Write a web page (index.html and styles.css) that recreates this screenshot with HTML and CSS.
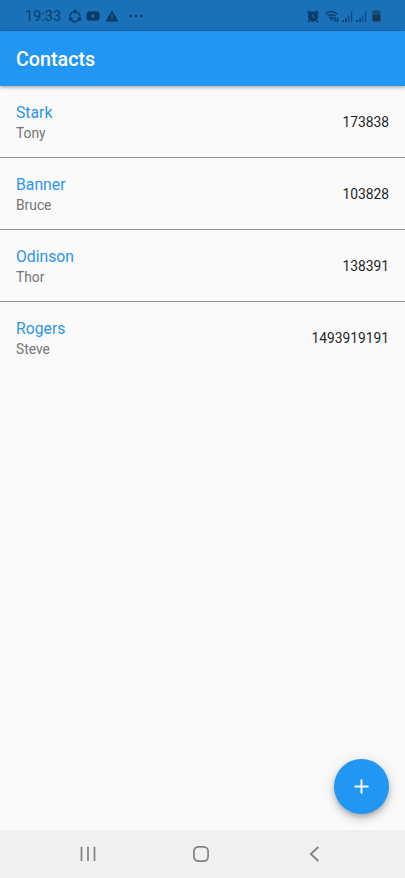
FILE: index.html
```html
<!DOCTYPE html>
<html lang="en">
<head>
<meta charset="utf-8">
<title>Contacts</title>
<link rel="stylesheet" href="styles.css">
</head>
<body>
<div class="app">
  <div class="status">
    <span class="clock">19:33</span>
    <svg class="share" width="14" height="14" viewBox="0 0 14 14" fill="none" stroke="currentColor" stroke-width="1.5"><path d="M4.4 3.1A5 5 0 0 0 1.9 7.2M3.7 11.4a5 5 0 0 0 6.4.1M12.1 7.2a5 5 0 0 0-2.4-4.1"/><g fill="currentColor" stroke="none"><circle cx="7" cy="2.6" r="2"/><circle cx="2.6" cy="10" r="2"/><circle cx="11.4" cy="10" r="2"/></g></svg>
    <svg class="video" width="14" height="10" viewBox="0 0 14 10"><path fill="currentColor" fill-rule="evenodd" d="M3 .3Q7 0 11 .3Q13.5.4 13.6 3Q13.8 5 13.6 7Q13.5 9.6 11 9.7Q7 10 3 9.7Q.5 9.6.4 7Q.2 5 .4 3Q.5.4 3 .3ZM5.6 3v4L9.2 5Z"/></svg>
    <svg class="warn" width="14" height="12" viewBox="0 0 14 12"><path fill="currentColor" fill-rule="evenodd" d="M7 .2 13.4 11.6H.6ZM6.4 4.3v3.5h1.2V4.3ZM6.4 8.9v1.3h1.2V8.9Z"/></svg>
    <svg class="more" width="14" height="4" viewBox="0 0 14 4" fill="currentColor"><circle cx="1.5" cy="2" r="1.2"/><circle cx="7" cy="2" r="1.2"/><circle cx="12.3" cy="2" r="1.2"/></svg>
    <svg class="alarm" width="12" height="13" viewBox="0 0 12 13"><path d="M.7 3 3.2.9M11.3 3 8.8.9M2.5 10.700 1.2 12M9.5 10.700 10.800 12" stroke="currentColor" stroke-width="1.8" fill="none"/><circle cx="6" cy="6.6" r="5.100" fill="currentColor"/><path class="hands" d="M6 3.8v3l2 1.2" fill="none" stroke-width="1"/></svg>
    <svg class="wifi" width="15" height="13" viewBox="0 0 15 13" fill="none" stroke="currentColor" stroke-width="1.3"><path d="M.6 4.1Q6.5-1 12.4 4.1M2.4 6.3Q6.5 2.8 10.6 6.3M4.3 8.4Q6.5 6.6 8.6 8.4"/><path fill="currentColor" stroke="none" d="M5.3 9.2h2.5L6.6 11ZM8.3 9.3 10 7.2l1.6 2.1h-1v2.5H9.3V9.3ZM11.8 7.7h1.3v2.5h1l-1.6 2.1-1.7-2.1h1Z"/></svg>
    <svg class="signal" width="12" height="12" viewBox="0 0 12 12" fill="currentColor"><path d="M.3 10h1.6v2H.3ZM3.3 8h1.6v4H3.3Z"/><path opacity=".7" d="M6.2 5.5h1.2V12H6.2ZM9 1h1.2v11H9Z"/></svg>
    <svg class="signal" width="12" height="12" viewBox="0 0 12 12" fill="currentColor"><path d="M.3 10h1.6v2H.3ZM3.3 8h1.6v4H3.3Z"/><path opacity=".7" d="M6.2 5.5h1.2V12H6.2ZM9 1h1.2v11H9Z"/></svg>
    <svg class="battery" width="9" height="12" viewBox="0 0 9 13"><path fill="currentColor" opacity=".65" d="M2.5 0h4v1.2H8Q9 1.2 9 2.2V5H0V2.2Q0 1.2 1 1.2h1.5Z"/><path fill="currentColor" d="M0 5h9v6.5q0 1-1 1H1q-1 0-1-1Z"/></svg>
  </div>
  <header class="bar"><h1>Contacts</h1></header>
  <main class="content">
    <ul class="list">
      <li class="row"><div><div class="last">Stark</div><div class="first">Tony</div></div><span class="phone">173838</span></li>
      <li class="row"><div><div class="last">Banner</div><div class="first">Bruce</div></div><span class="phone">103828</span></li>
      <li class="row"><div><div class="last">Odinson</div><div class="first">Thor</div></div><span class="phone">138391</span></li>
      <li class="row"><div><div class="last">Rogers</div><div class="first">Steve</div></div><span class="phone">1493919191</span></li>
    </ul>
    <button class="fab" aria-label="Add contact"><svg width="15" height="15" viewBox="0 0 15 15"><path d="M7.5.5v14M.5 7.500h14" stroke="#fff" stroke-width="1.900"/></svg></button>
  </main>
  <nav class="nav">
    <svg width="16" height="16" viewBox="0 0 16 16"><path d="M1.500.7v14.200M8 .7v14.200M14.500.7v14.200" stroke="currentColor" stroke-width="1.700"/></svg>
    <svg width="16" height="16" viewBox="0 0 16 16"><rect x=".9" y=".9" width="14.200" height="14.200" rx="4.500" fill="none" stroke="currentColor" stroke-width="1.700"/></svg>
    <svg width="16" height="16" viewBox="0 0 16 16"><path d="M12.300 1 4.800 8l7.500 7" fill="none" stroke="currentColor" stroke-width="1.800"/></svg>
  </nav>
</div>
</body>
</html>
```

FILE: styles.css
```css
* { box-sizing: border-box; }
body { margin: 0; font-family: Roboto, sans-serif; background: #fafafa; }
svg { display: block; flex: none; }
.app { height: 878px; display: flex; flex-direction: column; overflow: hidden; }
.status { height: 31px; flex: none; display: flex; align-items: center; padding: 1px 24px 0 25px; background: #1a71b8; color: #0b3c69; }
.clock { width: 43px; padding-top: 1px; font-size: 14.5px; line-height: 20px; }
.video { margin-left: 4px; }
.warn { margin-left: 5px; }
.more { margin-left: 10px; }
.alarm { margin-left: auto; }
.hands { stroke: #1a71b8; }
.wifi { margin-left: 6px; }
.signal { margin-left: 2px; }
.battery { margin-left: 4px; color: #173b56; }
.bar { height: 55px; flex: none; display: flex; align-items: center; padding: 2px 16px 0; background: #2196f3; color: #fff; box-shadow: 0 1px 4px rgba(0,0,0,.4); z-index: 1; }
.bar h1 { margin: 0; font-size: 19.7px; line-height: 24px; font-weight: 500; }
.content { flex: 1; display: flex; flex-direction: column; justify-content: space-between; }
.list { margin: 0; padding: 0; list-style: none; }
.row { height: 72px; display: flex; align-items: center; justify-content: space-between; padding: 1px 16px 0; border-bottom: 1px solid #969696; }
.row:last-child { height: 71px; border-bottom: 0; }
.last { font-size: 15.75px; line-height: 21px; color: #2b95e9; }
.first { font-size: 13.8px; line-height: 20px; color: #757575; }
.phone { font-size: 13.8px; line-height: 20px; color: #252525; }
.fab { align-self: flex-end; width: 55px; height: 55px; margin: 0 16px 16px; padding: 0; border: 0; border-radius: 50%; display: flex; align-items: center; justify-content: center; background: #2196f3; box-shadow: 0 3px 5px -1px rgba(0,0,0,.2), 0 5px 9px rgba(0,0,0,.14), 0 1px 15px rgba(0,0,0,.1); }
.nav { height: 48px; flex: none; display: flex; align-items: center; justify-content: space-between; padding: 0 83px 0 80px; background: #f0f0f0; color: #808080; z-index: 1; }
```
